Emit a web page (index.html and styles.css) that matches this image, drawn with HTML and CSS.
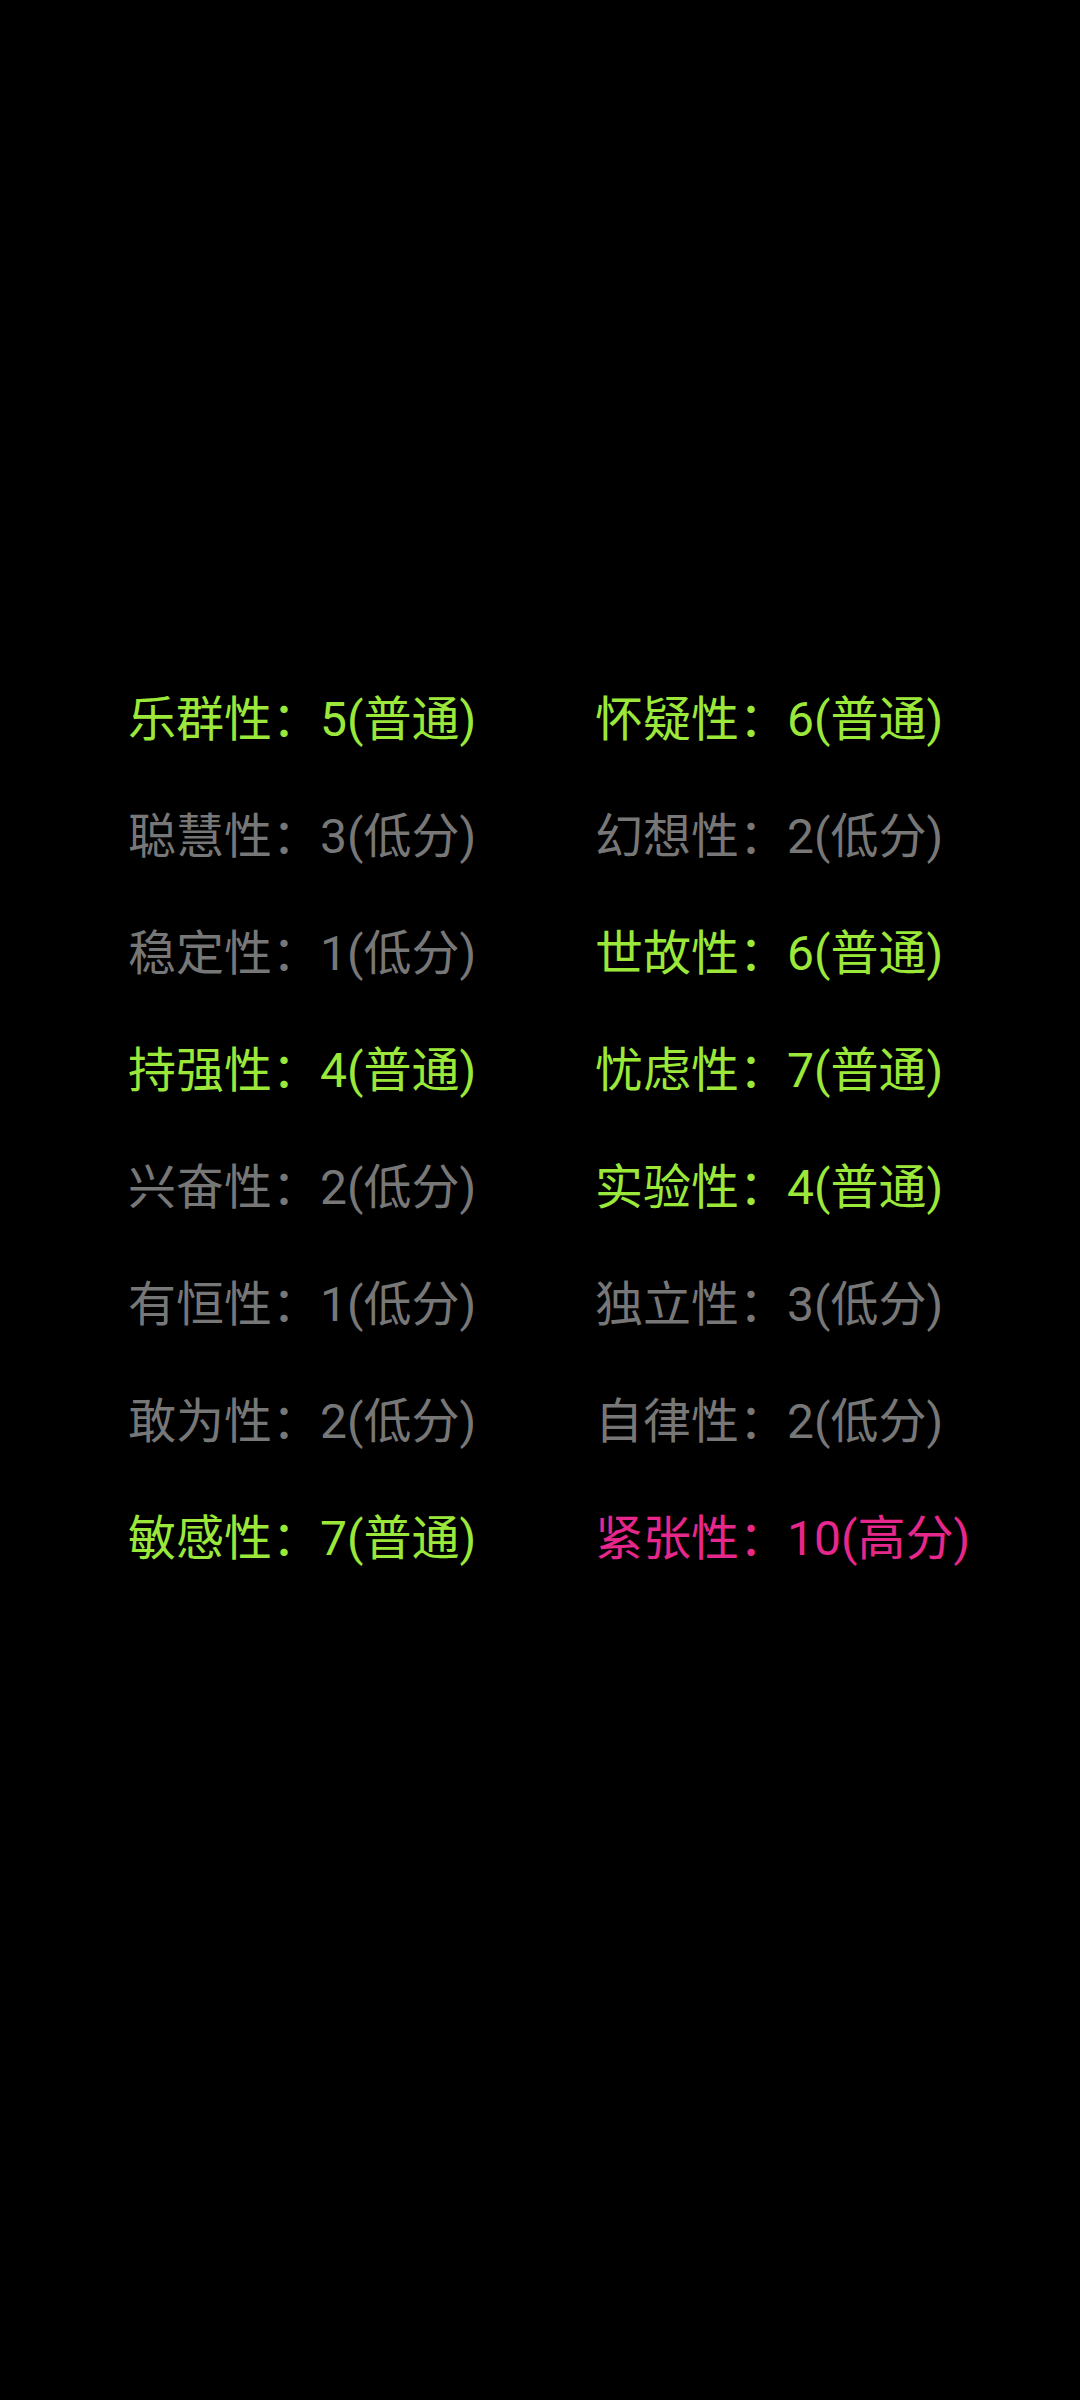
FILE: index.html
```html
<!DOCTYPE html>
<html lang="zh-CN">
<head>
<meta charset="utf-8">
<link rel="stylesheet" href="styles.css">
</head>
<body>
<div class="grid">
  <div class="item normal">乐群性：5(普通)</div>
  <div class="item normal">怀疑性：6(普通)</div>
  <div class="item low">聪慧性：3(低分)</div>
  <div class="item low">幻想性：2(低分)</div>
  <div class="item low">稳定性：1(低分)</div>
  <div class="item normal">世故性：6(普通)</div>
  <div class="item normal">持强性：4(普通)</div>
  <div class="item normal">忧虑性：7(普通)</div>
  <div class="item low">兴奋性：2(低分)</div>
  <div class="item normal">实验性：4(普通)</div>
  <div class="item low">有恒性：1(低分)</div>
  <div class="item low">独立性：3(低分)</div>
  <div class="item low">敢为性：2(低分)</div>
  <div class="item low">自律性：2(低分)</div>
  <div class="item normal">敏感性：7(普通)</div>
  <div class="item high">紧张性：10(高分)</div>
</div>
</body>
</html>
```
FILE: styles.css
```css
html, body {
  margin: 0;
  padding: 0;
  background: #000;
  width: 1080px;
  height: 2400px;
}
.grid {
  display: grid;
  grid-template-columns: 467px 1fr;
  padding: 661px 0 0 128px;
}
.item {
  font-family: Roboto, "Noto Sans CJK SC", sans-serif;
  font-size: 48px;
  line-height: 117px;
  white-space: nowrap;
}
.normal { color: #9be83a; }
.low { color: #777777; }
.high { color: #e6278b; }
```
